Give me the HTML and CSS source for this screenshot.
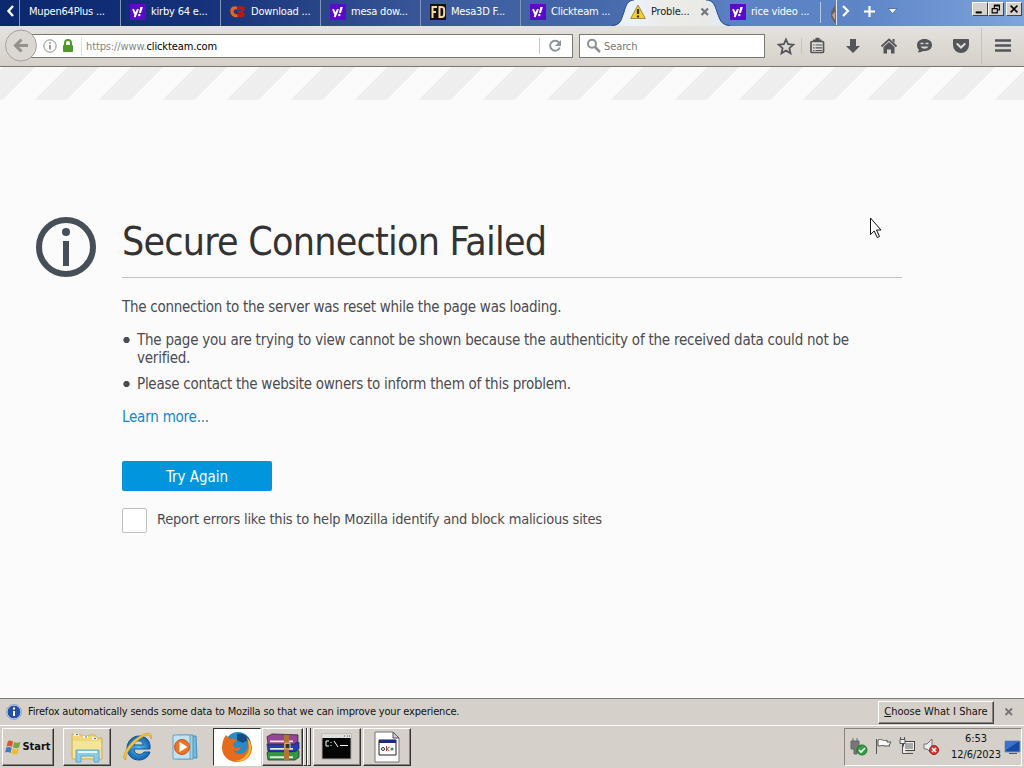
FILE: index.html
```html
<!DOCTYPE html>
<html lang="en">
<head>
<meta charset="utf-8">
<title>Problem loading page</title>
<link rel="stylesheet" href="styles.css">
</head>
<body>
<svg class="defs" width="0" height="0">
  <symbol id="yahoo" viewBox="0 0 16 16"><rect width="16" height="16" fill="#5b0ac8"/><path d="M3 5.2 5.2 10M8 5.2 4.6 13" stroke="#fff" stroke-width="2" fill="none"/><path d="M10.3 3h2.6L11 9H9z" fill="#fff"/><circle cx="9.3" cy="11" r="1.2" fill="#fff"/></symbol>
</svg>
<div class="screen">
  <header class="tabs">
    <div class="scroll-left"><svg width="20" height="26" viewBox="0 0 20 26"><path d="M13 6 8.500 11 13 16" fill="none" stroke="#fff" stroke-width="2.400"/></svg></div>
    <div class="tab first"><span class="t1">Mupen64Plus ...</span></div>
    <div class="tab"><svg class="fav"><use href="#yahoo"/></svg><span>kirby 64 e...</span></div>
    <div class="tab"><svg class="fav" viewBox="0 0 16 16"><path d="M8 3C1 0-1 6 1 10c2 4 6 4 8 2l-2-2C4 11 3 8 4 6c1-1 3-1 4 0z" fill="#e8651f"/><path d="M7 3c3-2 8-1 8 2l-2 3 2 3c-1 3-6 3-8 1l1-2h3V9H8V7h3V6H7z" fill="#b51c17"/></svg><span>Download ...</span></div>
    <div class="tab"><svg class="fav"><use href="#yahoo"/></svg><span>mesa dow...</span></div>
    <div class="tab"><svg class="fav" viewBox="0 0 16 16"><rect width="16" height="16" fill="#15100f"/><path d="M2.500 14V3H7M2.500 8H6M9.500 3v10h1.700c3 0 3-1 3-5s0-5-3-5z" fill="none" stroke="#f3d9a8" stroke-width="2"/></svg><span>Mesa3D F...</span></div>
    <div class="tab last"><svg class="fav"><use href="#yahoo"/></svg><span>Clickteam ...</span></div>
    <div class="tab active">
      <svg class="shape" width="118" height="26" viewBox="0 0 118 26"><defs><linearGradient id="ag" x2="1"><stop offset="0" stop-color="#e6effb"/><stop offset=".2" stop-color="#edf2f8"/><stop offset=".45" stop-color="#ebebe8"/><stop offset=".75" stop-color="#eaeae6"/><stop offset="1" stop-color="#dfebfa"/></linearGradient></defs><path d="M0 26C9 25 9 20 12 12 14 5 16 0 22 0H94C101 0 103 5 105 12 108 20 109 25 118 26z" fill="url(#ag)"/><path d="M0 25.500C9 25 9 20 12 12 14 5 16 0 22 0M94 0C101 0 103 5 105 12 108 20 109 25 118 25.500" fill="none" stroke="#294a86"/></svg>
      <svg class="fav" viewBox="0 0 16 16"><path d="M8 1 15.300 14.500H.7z" fill="#f1cf2d" stroke="#9b8952"/><path d="M8 5v5M8 11.500v2" stroke="#37321f" stroke-width="2.200"/></svg><span>Proble...</span>
      <svg class="x" width="10" height="10" viewBox="0 0 10 10"><path d="M1.500 1.500 8 8M8 1.500 1.500 8" stroke="#73767a" stroke-width="2.200"/></svg>
    </div>
    <div class="tab rice"><svg class="fav"><use href="#yahoo"/></svg><span>rice video ...</span></div>
    <svg class="tabtools" width="90" height="26" viewBox="0 0 90 26"><path d="M.5 2v21" stroke="#b7c8e4"/><path d="m15 5-4 7v5l3 5 2 2z" fill="#6d625b"/><path d="m12 15 3-3v8z" fill="#b4a79b"/><path d="M16.500 0v25" stroke="#dbe6f7"/><path d="m23 6 5 5-5 5" stroke="#fff" stroke-width="2.200" fill="none"/><path d="M49.500 6v11M44 11.500h11" stroke="#fff" stroke-width="2.200"/><path d="m68 8.500 4.500 5 4.500-5z" fill="#fff" stroke="#3c5f99" stroke-width=".8"/></svg>
    <div class="winbtns">
      <svg class="wb" viewBox="0 0 16 14"><path d="M3 11h7" stroke="#000" stroke-width="2.300"/></svg><svg class="wb" viewBox="0 0 16 14"><path d="M6 6V3.500h6V8h-2M5.500 2.500h7M3.500 7v4.500h6V7M3 6.500h7" stroke="#000" fill="none" stroke-width="1.300"/></svg><svg class="wb gap" viewBox="0 0 16 14"><path d="m4 3 8 8m0-8-8 8" stroke="#000" stroke-width="1.900"/></svg>
    </div>
  </header>

  <nav class="toolbar">
    <svg class="back" width="34" height="34" viewBox="0 0 34 34"><circle cx="16" cy="16.500" r="15.500" fill="#dbd8d2" stroke="#a5a29d"/><path d="M23 16.500H11M16.500 10.500l-6 6 6 6" fill="none" stroke="#94918d" stroke-width="3"/></svg>
    <div class="url">
      <svg class="info" width="14" height="14" viewBox="0 0 14 14"><circle cx="7" cy="7" r="6.200" fill="none" stroke="#8b8b8b"/><path d="M7 6v4.500M7 3.300v1.500" stroke="#777" stroke-width="1.500"/></svg>
      <svg class="lock" width="12" height="14" viewBox="0 0 12 14"><path d="M3 7V4a3 3 0 0 1 6 0v3" stroke="#4d9a2b" stroke-width="2" fill="none"/><rect x="1" y="6" width="10" height="7" rx="1" fill="#4d9a2b"/></svg>
      <span class="address"><span class="dim">https://www.</span>clickteam.com</span>
      <svg class="reload" width="33" height="22" viewBox="0 0 33 22"><path d="M.5 3v16" stroke="#c8c8c8"/><path d="M20 7.500A5 5 0 1 0 20.800 12.500" fill="none" stroke="#8d969a" stroke-width="2"/><path d="M22 5v6h-6z" fill="#8d969a"/></svg>
    </div>
    <div class="search"><svg width="16" height="16" viewBox="0 0 16 16"><circle cx="6" cy="5.800" r="4" fill="none" stroke="#8d8f90" stroke-width="2"/><path d="m9 9 5 5" stroke="#8d8f90" stroke-width="2.500"/></svg><span>Search</span></div>
    <svg class="tools" width="256" height="40" viewBox="768 26 256 40" fill="none" stroke="#535559" stroke-width="2">
      <path d="m786 39.500 2.100 4.700 5.200.5-3.900 3.500 1.100 5.100-4.500-2.700-4.500 2.700 1.100-5.100-3.900-3.500 5.200-.5z" stroke-width="1.800"/>
      <path d="M801.500 38v16M981.500 28v36" stroke="#c5c1bb" stroke-width="1"/>
      <rect x="811" y="41.500" width="12.500" height="11" rx="1" stroke-width="1.700" fill="#e0ddd8"/><path d="M813 40.500h8.500M815.500 38.800h4" stroke-width="2"/><path d="M813 45h1.500m1 0h6.500M813 47.800h1.500m1 0h6.500M813 50.500h1.500m1 0h6.500" stroke-width="1.200"/>
      <path d="M850 39h6v7h4l-7 7-7-7h4z" fill="#535559" stroke="none"/>
      <path d="m881.500 46.500 7.500-7 7.500 7" stroke-width="1.800"/><path d="m883.500 47 5.500-5 5.500 5v6.500H891v-4h-4v4h-3.500zM892.500 39h2v4l-2-2z" fill="#535559" stroke="none"/>
      <path d="M924.500 39c4.500 0 7.500 2.500 7.500 6s-3 6-7.500 6l-2 .2c-1.500 1-3.500 1.300-5 .8 1-.8 1.400-1.500 1.400-2.300-1.400-1.200-1.900-2.700-1.900-4.700 0-3.500 3-6 7.500-6z" fill="#535559" stroke="none"/><path d="M920.500 46.500c2 3 6 3 8 0z" fill="#dad6cf" stroke="none"/><path d="M920.500 43.500h3m2 0h3" stroke="#dad6cf" stroke-width="1.300"/>
      <path d="M954 39h14q1 0 1 1v5a8 8 0 0 1-16 0v-5q0-1 1-1z" fill="#535559" stroke="none"/><path d="m957.300 44 3.700 3.500 3.700-3.500" stroke="#e2dfd9" stroke-linecap="round"/>
      <path d="M995 40.500h16M995 45.500h16M995 50.500h16" stroke-width="2.600"/>
    </svg>
  </nav>

  <main class="page">
    <svg class="bigicon" width="60" height="60" viewBox="0 0 60 60"><circle cx="30" cy="30" r="27" fill="none" stroke="#464f57" stroke-width="6"/><circle cx="30" cy="15" r="4" fill="#464f57"/><path d="M30 24v25" stroke="#464f57" stroke-width="6"/></svg>
    <section class="content">
      <h1><span>Secure Connection Failed</span></h1>
      <p class="lead"><span class="b1">The connection to the server was reset while the page was loading.</span></p>
      <ul>
        <li><span class="b2">The page you are trying to view cannot be shown because the authenticity of the received data could not be<br>verified.</span></li>
        <li><span class="b3">Please contact the website owners to inform them of this problem.</span></li>
      </ul>
      <p class="learn"><a>Learn more...</a></p>
      <button class="retry"><span>Try Again</span></button>
      <label class="report"><i class="box"></i><span>Report errors like this to help Mozilla identify and block malicious sites</span></label>
    </section>
    <svg class="cursor" width="13" height="22" viewBox="0 0 13 22"><path d="M1.500 1v16.500l3.700-3.500 3 6.500 2.300-1-3-6.500H12z" fill="#fff" stroke="#111"/></svg>
  </main>

  <aside class="notice">
    <svg width="16" height="16" viewBox="0 0 16 16"><circle cx="8" cy="8" r="7" fill="#2450a8" stroke="#d9e1ef"/><circle cx="8" cy="8" r="7.600" fill="none" stroke="#7389b5" stroke-width=".6"/><path d="M8 7v5M8 3.500v2" stroke="#fff" stroke-width="2"/></svg>
    <span class="msg">Firefox automatically sends some data to Mozilla so that we can improve your experience.</span>
    <button class="choose"><span><u>C</u>hoose What I Share</span></button>
    <svg class="nx" width="10" height="10" viewBox="0 0 10 10"><path d="M1.500 1.500 8 8M8 1.500 1.500 8" stroke="#77777a" stroke-width="2"/></svg>
  </aside>

  <footer class="taskbar">
    <button class="tb start"><svg width="16" height="16" viewBox="0 0 16 16"><path d="M3 2q2-1 5 .5L7 8Q4 6.500 1.500 7.500z" fill="#d9572a"/><path d="M9 3q3 1.500 6.500 0L14 8.500q-3 1-6 0z" fill="#75a840"/><path d="M1.300 8.500Q4 7.500 6.700 9l-1.200 5Q3 12.500 0 13.500z" fill="#4278c4"/><path d="M7.700 9.500q3 1.300 6 0L12.500 15q-3 1-6-.5z" fill="#efbd2c"/></svg><span>Start</span></button>
    <button class="tb explorer"><svg width="36" height="34" viewBox="0 0 36 34"><path d="M3 8V4h8l2 2h6l2-1h5l2 3h5v21H3z" fill="#efd778" stroke="#cdb25c"/><path d="M4 11h28v17H4z" fill="#f6e596"/><path d="M5 4.500h5M14 7h5M23 8.500h5" stroke="#fff" stroke-width="2"/><path d="M7 4.500h2M16 7h2M25 8.500h2" stroke="#3e78a0"/><path d="M7 32V20h23v12h-5v-6H12v6z" fill="#8bcbe8" stroke="#5ca9d2"/><path d="M9 22h19" stroke="#dff5ff" stroke-width="2"/></svg></button>
    <svg class="ie" width="32" height="32" viewBox="0 0 32 32"><defs><radialGradient id="ieg"><stop stop-color="#55c3f2"/><stop offset="1" stop-color="#1764b0"/></radialGradient></defs><path d="M28 18H12c0 6 8 7 10 3h6C26 27 21 29 17 29 9 29 5 23 5 17S10 5 17 5s12 5 11 13zM12 14h9c0-5-8-6-9 0z" fill="url(#ieg)" stroke="#12549a"/><path d="M4 29C-2 28 5 14 15 7S31 1 29 8C28 1 20 5 13 12S3 25 4 29z" fill="#f4c63b" stroke="#d29b21" stroke-width=".7"/></svg>
    <svg class="wmp" width="30" height="28" viewBox="0 0 30 28"><path d="M9 3h15l1 22H10z" fill="#75b9dd" stroke="#4c8eb7"/><path d="M5 2h16v24H5z" fill="#a1d1ea" stroke="#5598bf"/><path d="M1 2h17v24H1z" fill="#c3e2f2" stroke="#69a4c6"/><circle cx="10" cy="14" r="7.500" fill="#ec742a" stroke="#c95719"/><path d="m7.500 9 8 5-8 5z" fill="#fff"/></svg>
    <button class="tb pressed"><svg width="32" height="32" viewBox="0 0 32 32"><circle cx="17" cy="14" r="13" fill="#268bc6"/><path d="M16 3c5-2 12 2 13 8-3-2-5-1-7 1-2-2-6-1-6-4z" fill="#154c83"/><path d="M3 7 5 4l4 4c3-1 5 0 7 1l-4 4c0 3 2 4 4 4l4-1c-1 4-5 5-8 3 4 7 14 4 15-3 1-4 0-7-2-10 5 4 6 8 6 12-1 8-7 13-15 13C7 31 1 24 1 17c0-4 1-7 2-10z" fill="#e66b1d"/><path d="M26 7c5 5 6 14 0 20-3 3-8 4-12 3 7-1 13-5 14-13 0-4-1-7-2-10z" fill="#f7b72c"/></svg></button>
    <div class="group"><button class="tb rar"><svg width="34" height="28" viewBox="0 0 34 30" preserveAspectRatio="none"><g stroke="#222" stroke-width=".7"><path d="m1 21 5-3 27 1v7l-4 3H2z" fill="#2d9942"/><path d="m1 12 5-3 27 1v7l-4 3H2z" fill="#263db2"/><path d="m1 4 5-3 26 1v7l-4 3H2z" fill="#994397"/></g><path d="M4 8h23v2H4zM4 16h23v2H4zM4 25h23v2H4z" fill="#e7e4dc"/><path d="M18 2h5v27h-5z" fill="#b27238"/><path d="M19 11h5v6h-5z" fill="#333" stroke="#eed18a"/></svg></button><i></i><i></i></div>
    <button class="tb cmd"><svg width="32" height="28" viewBox="0 0 32 28"><rect x="1" y="1" width="29" height="25" fill="#050505" stroke="#aaa"/><path d="M1 1h29v4H1z" fill="#ddd"/><path d="M23 3h1m2 0h1m1 0h1" stroke="#555"/><path d="M8 8H5v5h3M10 9v1m0 2v1M13 8l4 6M19 12.500h8" stroke="#fff" fill="none"/></svg></button>
    <button class="tb doc"><svg width="26" height="32" viewBox="0 0 26 32"><path d="M1 1h18l6 6v24H1z" fill="#fff" stroke="#777"/><path d="M19 1v6h6z" fill="#ccc" stroke="#555"/><path d="M5 9h17v15H5z" fill="#fff" stroke="#222"/><path d="M5 9h17v3H5z" fill="#172b81"/><circle cx="9" cy="18" r="1.500" fill="none" stroke="#333"/><path d="m12.500 15 0 5m3-4-3 2 3 2" stroke="#a43" fill="none"/><circle cx="18" cy="18" r="1.500" fill="#3a8068"/></svg></button>
    <div class="tray">
      <svg width="92" height="20" viewBox="0 0 92 20"><path d="M3 1v3M7 1v3M1 4h8v8H7v5H4v-5H1z" fill="#777" stroke="#666"/><circle cx="12" cy="13" r="5" fill="#34a043" stroke="#187825"/><path d="m9 13 2 2 4-4" fill="none" stroke="#fff" stroke-width="1.600"/><path d="M26.500 2v15M28 3c4-2 5 2 9 0v2h4l-2 3 1 1h-5c-3-1-4 0-7 0z" fill="#f8f8f8" stroke="#555"/><rect x="53.500" y="4.500" width="11" height="9" fill="#aaa" stroke="#444"/><rect x="54.500" y="5.500" width="9" height="7" fill="none" stroke="#eee"/><path d="M56 16.500h7M50 2.500h5v4h-5zM52.500 7v9.500h4M50.500 0v2m4-2v2" stroke="#555" fill="#eee"/><path d="M74 7h3l5-5v15l-5-5h-3z" fill="#eee" stroke="#777"/><circle cx="84" cy="13" r="4.500" fill="#d93636" stroke="#a91616"/><path d="m82 11 4 4m0-4-4 4" stroke="#fff" stroke-width="1.500"/></svg>
      <div class="clock"><span>6:53</span><span>12/6/2023</span></div>
      <svg class="desk" width="17" height="16" viewBox="0 0 17 16"><path d="M1 2h15v11H1z" fill="#174ba3" stroke="#7895c8"/><path d="M2 3h12L2 11z" fill="#3974ca"/><path d="M5 14.500h8" stroke="#555"/></svg>
    </div>
  </footer>
</div>
</body>
</html>
```

FILE: styles.css
```css
* { box-sizing: border-box; }
body { margin: 0; font: 11px/14px "DejaVu Sans Condensed", "DejaVu Sans", sans-serif; color: #111; }
svg { display: block; flex: none; }
.defs { position: absolute; }
span { white-space: nowrap; }
button { font: inherit; color: inherit; padding: 0; }
.screen { width: 1024px; height: 768px; display: flex; flex-direction: column; overflow: hidden; background: #d5d1ca; }

.tabs { height: 26px; display: flex; background: linear-gradient(90deg, #0b276e 0, #15317a 200px, #2a4788 330px, #3c5b9d 450px, #4669ab 600px, #5c83c4 750px, #5c84c6 850px, #7ea4db 1024px); color: #fff; flex: none; }
.scroll-left { width: 20px; border-right: 1px solid #8494ba; }
.tab { width: 100px; display: flex; align-items: center; gap: 5px; padding: 0 0 2px 9px; border-right: 1px solid #8494ba; background-clip: padding-box; letter-spacing: -.2px; }
.tab.first { width: 101px; }
.tab.last { border: 0; }
.fav { width: 16px; height: 16px; }
.tab.active { color: #222; position: relative; border: 0; padding-left: 9px; }
.shape { position: absolute; left: -9px; top: 0; }
.tab.active .fav, .tab.active span, .tab.active .x { position: relative; }
.tab.active .x { margin-left: 6px; }
.tab.rice { width: 99px; padding-left: 9px; border: 0; }
.winbtns { display: flex; margin-left: auto; padding: 2px 2px 0 0; }
.wb { width: 16px; height: 14px; background: #d6d2cb; border: 1px solid; border-color: #fff #444 #444 #fff; }
.wb.gap { margin-left: 2px; }

.toolbar { height: 41px; flex: none; display: flex; align-items: center; background: linear-gradient(#e4e2de, #d5d1ca); border-bottom: 1px solid #79756e; padding-left: 5px; }
.back { z-index: 1; margin-top: -1px; }
.url { width: 542px; height: 24px; margin-left: -8px; background: #fff; border: 1px solid #7c786f; display: flex; align-items: center; padding-left: 11px; }
.lock { margin-left: 5px; }
.address { margin-left: 7px; padding: 2px 0 0 4px; border-left: 1px solid #ddd; line-height: 16px; color: #000; letter-spacing: -.12px; }
.dim { color: #858585; }
.reload { margin-left: auto; }
.search { width: 186px; height: 24px; margin-left: 6px; background: #fff; border: 1px solid #7c786f; display: flex; align-items: center; gap: 2px; padding-left: 6px; color: #777; }
.search span { padding-top: 2px; letter-spacing: -.1px; }
.tools { margin-left: 3px; }

.page { position: relative; height: 631px; flex: none; display: flex; background: linear-gradient(-45deg, #eee 33%, #fbfbfb 33%, #fbfbfb 66%, #eee 66%) 3px 0 / 64px 33px repeat-x #fbfbfb; padding: 150px 0 0 36px; }
.content { width: 780px; margin-left: 26px; color: #4b4b52; font-size: 15px; line-height: 18px; }
h1 { margin: 0; height: 61px; border-bottom: 1px solid #c1c1c1; font-weight: 400; font-size: 39px; line-height: 49px; letter-spacing: -.77px; color: #333; }
.lead { margin: 20px 0 15px; }
.b1 { letter-spacing: -.27px; }
.b2 { letter-spacing: -.23px; }
.b3 { letter-spacing: -.26px; }
ul { margin: 0; padding: 0; list-style: none; }
li { margin-bottom: 8px; padding-left: 15px; background: radial-gradient(circle at 4.5px 9px, #4b4b52 2.8px, transparent 3.5px); }
.learn { margin: 15px 0 35px; color: #1587c9; letter-spacing: -.22px; }
.retry { display: block; width: 150px; height: 30px; border: 0; border-radius: 2px; background: #0095dd; color: #fff; padding-top: 2px; }
.report { display: flex; margin-top: 17px; gap: 10px; }
.box { width: 25px; height: 25px; border: 1px solid #c1c1c1; border-radius: 2px; background: #fff; }
.report span { padding-top: 2px; font-size: 14.5px; letter-spacing: -.2px; }
.cursor { position: absolute; left: 869px; top: 150px; }

.notice { height: 27px; flex: none; display: flex; align-items: center; border-top: 1px solid #7f7b75; padding: 0 10px 0 6px; background: #d5d1ca; }
.msg { margin-left: 6px; letter-spacing: -.18px; }
.choose { margin-left: auto; width: 116px; height: 23px; border: 1px solid; border-color: #fff #444 #444 #fff; box-shadow: inset -1px -1px #88847d; background: #d5d1ca; }
.nx { margin-left: 10px; }

.taskbar { height: 43px; flex: none; border-top: 1px solid #fff; background: #d5d1ca; display: flex; align-items: flex-start; padding: 2px 2px 0; }
.tb { height: 38px; width: 48px; display: flex; align-items: center; justify-content: center; background: #d5d1ca; border: 1px solid; border-color: #fff #333 #333 #fff; box-shadow: inset -1px -1px #88847d; }
.start { width: 52px; font-weight: 700; gap: 1px; }
.explorer { margin-left: 9px; }
.ie { margin: 3px 0 0 11px; }
.wmp { margin: 5px 0 0 18px; }
.pressed { width: 48px; margin-left: 11px; background: #fff; border-color: #333 #fff #fff #333; box-shadow: none; }
.group { display: flex; margin-left: 1px; }
.rar { width: 41px; }
.group i { width: 4px; height: 38px; border-right: 1px solid #333; border-left: 1px solid #fff; border-bottom: 1px solid #333; }
.cmd, .doc { margin-left: 2px; }
.tray { margin-left: auto; width: 178px; height: 38px; display: flex; align-items: center; border: 1px solid; border-color: #88847d #fff #fff #88847d; padding-left: 5px; }
.clock { width: 56px; margin-left: 7px; display: flex; flex-direction: column; align-items: center; line-height: 16px; letter-spacing: -.1px; }
.desk { margin-left: 1px; }
```
